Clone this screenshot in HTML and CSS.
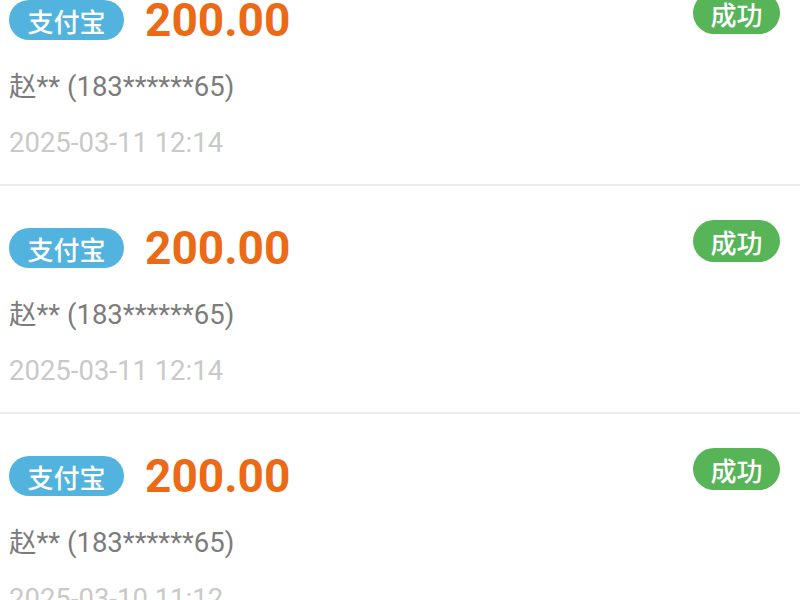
FILE: index.html
```html
<!DOCTYPE html>
<html lang="zh-CN">
<head>
  <meta charset="UTF-8" />
  <meta name="viewport" content="width=device-width, initial-scale=1.0"/>
  <title>提现记录</title>
  <link rel="stylesheet" href="styles.css">
</head>
<body>
  <div class="list">
    <div class="item">
      <div class="top">
        <div class="left">
          <span class="channel">支付宝</span>
          <span class="amount">200.00</span>
        </div>
        <span class="state">成功</span>
      </div>
      <div class="name">赵** (183******65)</div>
      <div class="time">2025-03-11 12:14</div>
    </div>

    <div class="item">
      <div class="top">
        <div class="left">
          <span class="channel">支付宝</span>
          <span class="amount">200.00</span>
        </div>
        <span class="state">成功</span>
      </div>
      <div class="name">赵** (183******65)</div>
      <div class="time">2025-03-11 12:14</div>
    </div>

    <div class="item">
      <div class="top">
        <div class="left">
          <span class="channel">支付宝</span>
          <span class="amount">200.00</span>
        </div>
        <span class="state">成功</span>
      </div>
      <div class="name">赵** (183******65)</div>
      <div class="time">2025-03-10 11:12</div>
    </div>
  </div>
</body>
</html>
```

FILE: styles.css
```css
body {
  margin: 0; background: #fff; overflow: hidden;
  font-family: Roboto, "Noto Sans CJK SC", sans-serif;
}
.list { margin-top: -42px; }
.item {
  height: 228px; box-sizing: border-box;
  padding: 34px 20px 0 9px; border-bottom: 2px solid #ececec;
}
.top { display: flex; justify-content: space-between; align-items: flex-start; }
.left { display: flex; align-items: center; height: 56px; }
.channel {
  display: inline-flex; align-items: center; justify-content: center;
  width: 115px; height: 40px; border-radius: 20px;
  background: #52b4de; color: #fff; font-size: 26px;
  font-family: "Noto Sans CJK SC", sans-serif; font-weight: 500;
}
.amount {
  margin-left: 21px; color: #ec6916; font-size: 46px;
  font-weight: bold; line-height: 56px;
}
.state {
  display: inline-flex; align-items: center; justify-content: center;
  width: 87px; height: 42px; border-radius: 21px;
  background: #58b557; color: #fff; font-size: 26px;
  font-family: "Noto Sans CJK SC", sans-serif; font-weight: 500;
}
.name { margin-top: 19px; font-size: 27.5px; line-height: 40px; color: #7c7c7c; }
.time { margin-top: 16px; font-size: 27.5px; line-height: 40px; color: #c9c9c9; }
```
